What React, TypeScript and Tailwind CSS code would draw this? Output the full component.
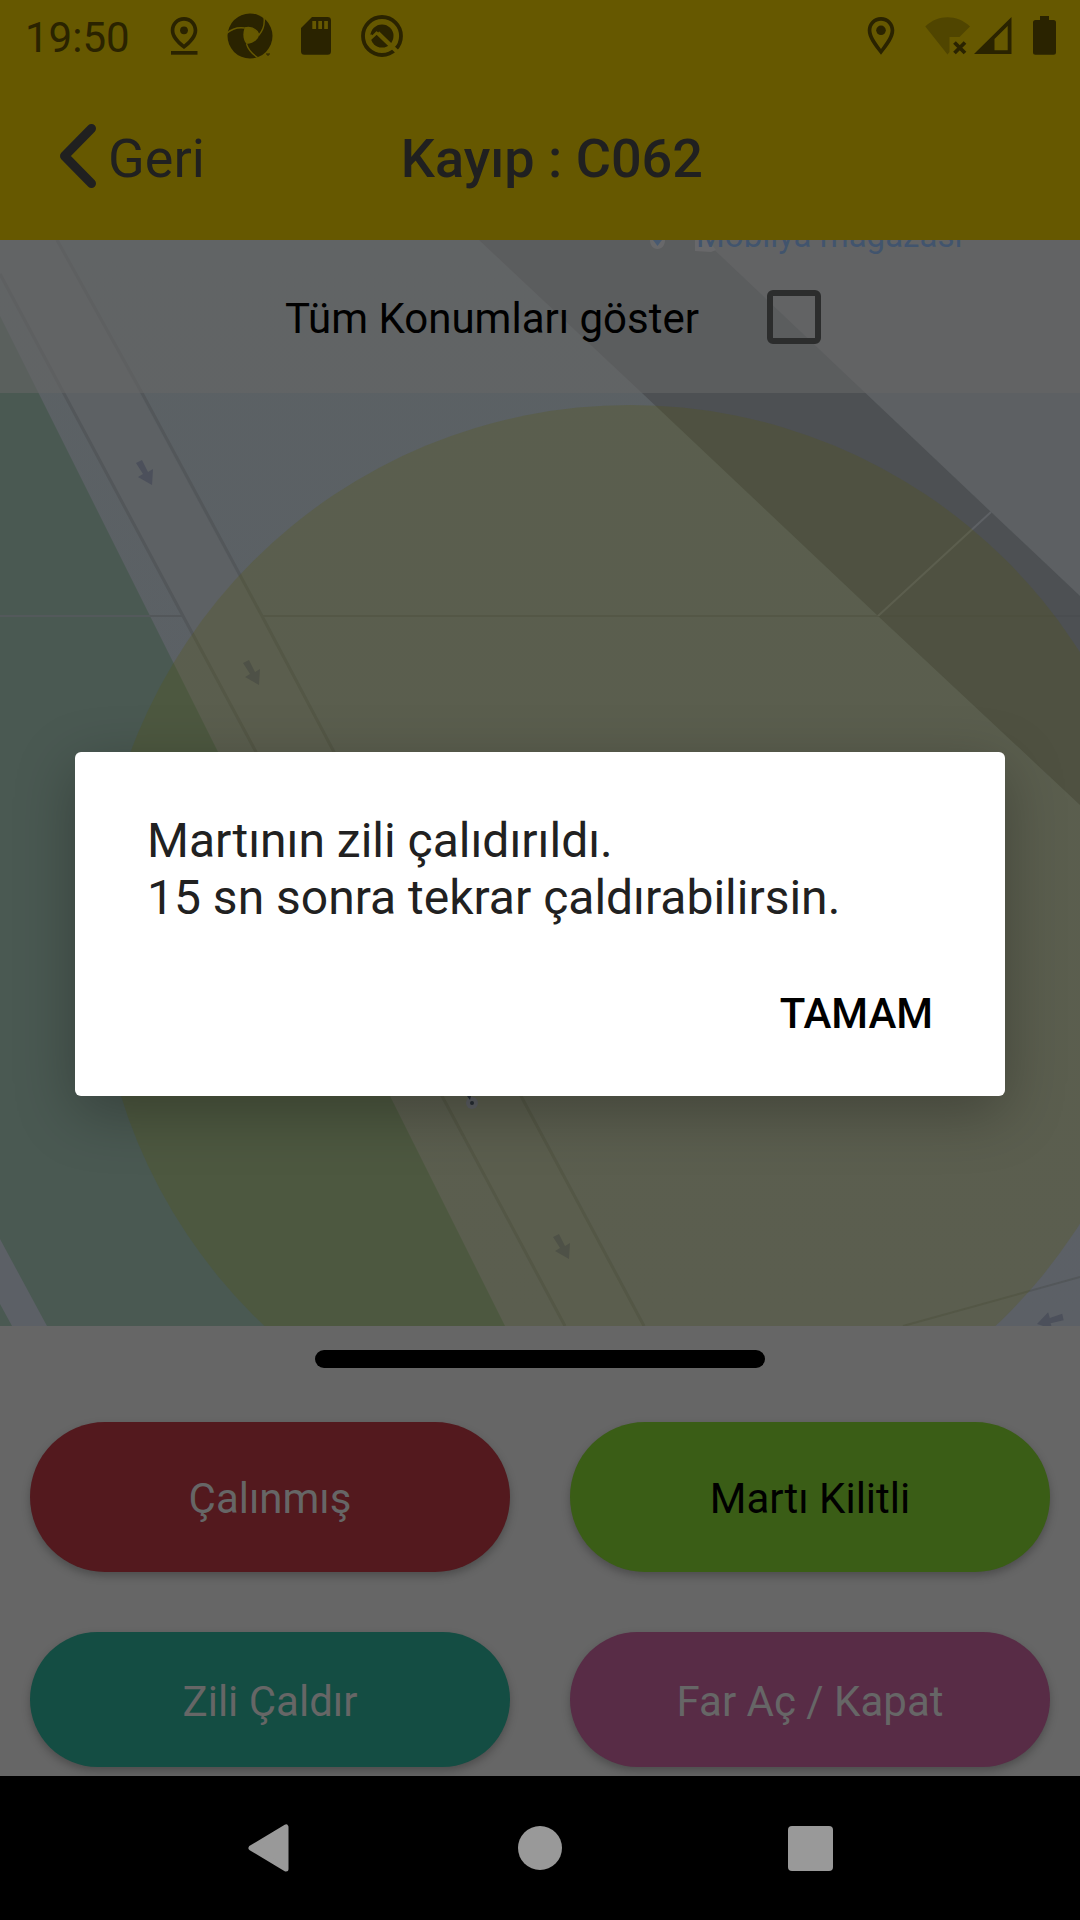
const INK = "#2a2300";

function StatusBar() {
  return (
    <div className="flex h-[72px] items-center pl-[25px] pr-[24px] text-[#2a2300]">
      <span className="pt-[3px] text-[42px] leading-[48px]">19:50</span>
      <svg className="ml-[40px] shrink-0" width="28" height="40" viewBox="170 16 28 40" aria-hidden="true">
        <path
          fill={INK}
          fillRule="evenodd"
          d="M184 17c7.6 0 13.3 6 13.3 13.3 0 6.5-4.800 12.700-13.300 18.700-8.500-6-13.300-12.200-13.300-18.700C170.700 23 176.400 17 184 17zm0 3.700c-5.400 0-9.600 4.200-9.600 9.600 0 4.500 3.200 9 9.600 14.200 6.400-5.200 9.600-9.700 9.600-14.200 0-5.400-4.200-9.600-9.600-9.600z"
        />
        <circle cx="184" cy="30.300" r="3.900" fill={INK} />
        <path fill={INK} d="M171 51h26.500v3.700H171z" />
      </svg>
      <svg className="ml-[28px] shrink-0" width="48" height="48" viewBox="226 12 48 48" aria-hidden="true">
        <circle cx="250" cy="36" r="22.500" fill={INK} />
        <path fill="#665800" d="M244.500 28c5.500-1.500 11 .5 14.500 7-.8 4.500-5 8-12.500 9-3.500-4.500-4-10-2-16z" />
        <g fill="none" stroke="#665800" strokeWidth="1.400">
          <path d="M226.500 33.500c4.500-4 11-6.500 18-5.500" />
          <path d="M244.500 28c7-1.500 12 1 14.500 7 4-4.500 6-10.500 5-18" />
          <path d="M246.500 44c1.500 5 5 9.500 11 13.500" />
        </g>
        <path stroke={INK} strokeWidth="1" d="M266 54h4M268 54v2" />
      </svg>
      <svg className="ml-[27px] shrink-0" width="30" height="40" viewBox="301 16 30 40" aria-hidden="true">
        <path
          fill={INK}
          fillRule="evenodd"
          d="M312 17h15.500a3.500 3.500 0 0 1 3.500 3.500v30.800a3.500 3.500 0 0 1-3.500 3.500h-23a3.500 3.500 0 0 1-3.500-3.500V28zM312.300 21v8h3.800v-8zm6 0v8h3.700v-8zm5.900 0v8h3.700v-8z"
        />
      </svg>
      <svg className="ml-[30px] shrink-0" width="42" height="44" viewBox="361 14 42 44" aria-hidden="true">
        <circle cx="382" cy="36" r="19" fill="none" stroke={INK} strokeWidth="3.800" />
        <circle cx="382" cy="36" r="11.500" fill={INK} />
        <path fill="none" stroke="#665800" strokeWidth="4.200" d="M368.500 39.500L376.700 32L399 53.500" />
        <path fill="none" stroke={INK} strokeWidth="2.400" d="M371.500 34.500L376.500 29.500L379 31.500" />
      </svg>
      <svg className="ml-auto shrink-0" width="28" height="40" viewBox="867 16 28 40" aria-hidden="true">
        <path
          fill={INK}
          fillRule="evenodd"
          d="M881 17c7.600 0 13.300 6 13.300 13.300 0 7-5.300 14.700-13.300 24.400-8-9.700-13.300-17.400-13.300-24.400C867.700 23 873.400 17 881 17zm0 3.700c-5.400 0-9.600 4.200-9.600 9.600 0 4.700 3.600 10.900 9.600 18.600 6-7.700 9.600-13.900 9.600-18.600 0-5.400-4.200-9.600-9.600-9.600z"
        />
        <circle cx="881" cy="30.300" r="4.800" fill={INK} />
      </svg>
      <svg className="ml-[30px] shrink-0" width="88" height="40" viewBox="925 16 88 40" aria-hidden="true">
        <path fill="#504500" d="M925.300 26.500C938 14.300 957 14.300 970 26.500L959.500 37H949.500V52l-2 2.500z" />
        <path stroke={INK} strokeWidth="3.800" d="M954.500 42.500l10.500 10.500M965 42.500L954.500 53" />
        <path fill={INK} fillRule="evenodd" d="M974 54L1011.500 17v37zM994.500 39v11.300h13.200V26z" />
      </svg>
      <svg className="ml-[20px] shrink-0" width="23" height="40" viewBox="1033 16 23 40" aria-hidden="true">
        <path
          fill={INK}
          d="M1040 16h9v4h4.500a2.500 2.500 0 0 1 2.500 2.500v29.700a2.500 2.500 0 0 1-2.500 2.500h-18a2.500 2.500 0 0 1-2.500-2.500V22.500a2.500 2.500 0 0 1 2.500-2.500h4.500z"
        />
      </svg>
    </div>
  );
}

const laneArrow = "M0 0L1 -16L-4 -13L-10 -25L-16 -22L-9 -11L-14 -8Z";

function MapView() {
  return (
    <svg
      className="absolute inset-0 h-full w-full"
      viewBox="0 240 1080 1086"
      preserveAspectRatio="xMidYMid slice"
      role="img"
      aria-label="Harita"
    >
      <defs>
        <linearGradient id="ground" x1="0" y1="0" x2="0" y2="1">
          <stop offset="0" stopColor="#5b6164" />
          <stop offset="1" stopColor="#5c6066" />
        </linearGradient>
      </defs>
      <path fill="url(#ground)" d="M0 240H1080V1326H0z" />
      <path fill="#5d6164" d="M0 274L565 1326H644L57 240H0z" />
      <path fill="#4a5952" d="M0 316L505 1326H0z" />
      <path fill="#5c6066" d="M0 1239L47 1326H12L0 1304z" />
      <path fill="#5d6063" d="M704 240H1080V596L991 512z" />
      <path fill="#4d5053" d="M479 240H704L991 512L1080 596V805L878 616L642 393z" />
      <g fill="none" stroke="#53575a" strokeWidth="3">
        <path d="M0 274L183 616L256 752L442 1096L565 1326" />
        <path d="M57 240L142 393L262 616L334 752L521 1096L644 1326" />
        <path strokeWidth="2" d="M150 616H183M262 616H878M903 1326L1080 1277" />
        <path strokeWidth="2" stroke="#53595b" d="M0 616H150" />
        <path strokeWidth="2" stroke="#4a4d50" d="M878 616H1080" />
        <path strokeWidth="2" stroke="#5e6165" d="M878 616L991 512" />
      </g>
      <g fill="#4c505b">
        <path d={laneArrow} transform="translate(152 485)" />
        <path d={laneArrow} transform="translate(259 685)" />
        <path d={laneArrow} transform="translate(569 1259)" />
        <path d={laneArrow} transform="translate(1037 1324) rotate(104)" />
      </g>
      <circle cx="630" cy="938" r="533" fill="#585608" fillOpacity="0.240" />
      <circle cx="472" cy="1103" r="6" fill="#5b5e62" />
      <path fill="#262d33" d="M467 1096h4l-1 4z" />
      <circle cx="472" cy="1103" r="2" fill="#262d33" />
      <path fill="#6c6d70" d="M650 240h15c0 5-3 9-7.500 9s-7.500-4-7.500-9z" />
      <path fill="#1c4880" d="M653 240h9l-4.500 6z" />
      <path fill="#6c6d70" d="M695 240H708L716 250L711 252L695 251z" />
      <text x="696" y="247" fill="#0c3a78" fontSize="33" fontFamily="Roboto, sans-serif">
        Mobilya mağazası
      </text>
    </svg>
  );
}

const actions = [
  { label: "Çalınmış", look: "h-[150px] bg-[#53191e] text-[#666666]" },
  { label: "Martı Kilitli", look: "h-[150px] bg-[#3a5d16] text-black" },
  { label: "Zili Çaldır", look: "h-[135px] bg-[#144d43] text-[#666666]" },
  { label: "Far Aç / Kapat", look: "h-[135px] bg-[#582c46] text-[#666666]" },
];

export default function App() {
  return (
    <div className="relative flex min-h-screen flex-col bg-[#666666] font-['Roboto',sans-serif]">
      <header className="bg-[#665800]">
        <StatusBar />
        <div className="flex h-[168px] items-center pl-[60px] text-[54px] leading-[64px] text-[#202020]">
          <button type="button" className="flex items-center gap-[12px]">
            <svg width="36" height="64" viewBox="0 0 36 64" fill="none" aria-hidden="true">
              <path
                d="M31.500 4.500L4.500 32L31.500 59.500"
                stroke="#202020"
                strokeWidth="9"
                strokeLinecap="round"
                strokeLinejoin="round"
              />
            </svg>
            <span className="pt-[6px]">Geri</span>
          </button>
          <h1 className="ml-[196px] pt-[6px] font-medium">Kayıp : C062</h1>
        </div>
      </header>

      <main className="relative min-h-[800px] flex-1 overflow-hidden">
        <MapView />
        <div className="relative flex h-[153px] items-center justify-center gap-[68px] bg-[#666666]/60 pl-[26px]">
          <label htmlFor="all-locations" className="pt-[4px] text-[42px] leading-[50px] text-black">
            Tüm Konumları göster
          </label>
          <input
            id="all-locations"
            type="checkbox"
            className="size-[54px] appearance-none rounded-[6px] border-[6px] border-[#2c2d2d]"
          />
        </div>
      </main>

      <section className="px-[30px] pb-[9px] pt-[24px]">
        <div className="mx-auto h-[18px] w-[450px] rounded-full bg-black" />
        <div className="mt-[54px] grid grid-cols-2 gap-[60px]">
          {actions.map((action) => (
            <button
              key={action.label}
              type="button"
              className={`rounded-full pt-[4px] text-[42px] leading-[50px] shadow-[0_4px_8px_rgba(0,0,0,0.25)] ${action.look}`}
            >
              {action.label}
            </button>
          ))}
        </div>
      </section>

      <nav className="flex h-[144px] justify-center bg-black">
        <div className="grid w-3/4 grid-cols-3 place-items-center">
          <button type="button" aria-label="Geri">
            <svg width="48" height="48" viewBox="0 0 48 48" aria-hidden="true">
              <path d="M5 24L40 3V45z" fill="#999999" stroke="#999999" strokeWidth="5" strokeLinejoin="round" />
            </svg>
          </button>
          <button type="button" aria-label="Ana ekran" className="size-[44px] rounded-full bg-[#999999]" />
          <button type="button" aria-label="Son uygulamalar" className="size-[45px] rounded-[4px] bg-[#999999]" />
        </div>
      </nav>

      <div className="absolute inset-0 flex items-center px-[75px] pb-[72px]">
        <div
          role="alertdialog"
          aria-describedby="bell-message"
          className="flex w-full flex-col rounded-[6px] bg-white px-[72px] pb-[52px] pt-[60px] shadow-[0_16px_60px_rgba(0,0,0,0.28)]"
        >
          <p id="bell-message" className="text-[48px] leading-[57px] text-[#212121]">
            Martının zili çalıdırıldı.
            <br />
            15 sn sonra tekrar çaldırabilirsin.
          </p>
          <button type="button" className="mt-[58px] self-end text-[42px] font-medium leading-[60px] text-black">
            TAMAM
          </button>
        </div>
      </div>
    </div>
  );
}
